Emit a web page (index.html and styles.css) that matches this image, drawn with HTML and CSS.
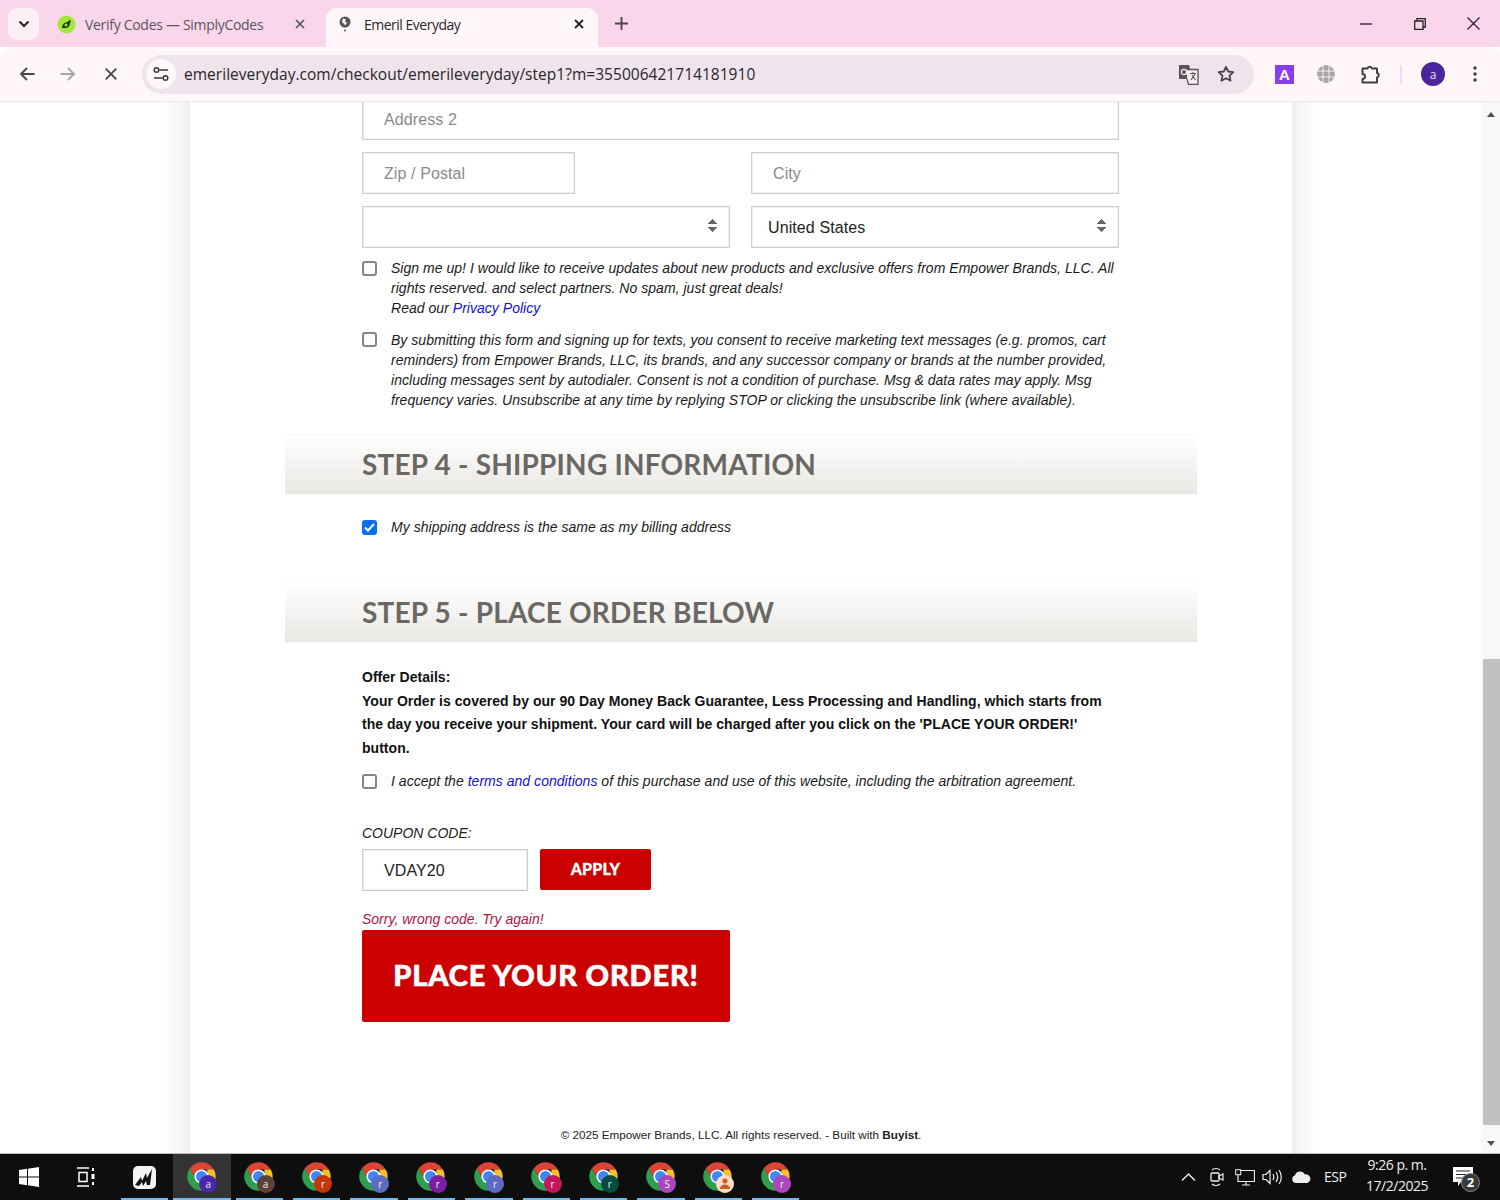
FILE: index.html
```html
<!DOCTYPE html>
<html lang="en">
<head>
<meta charset="utf-8">
<title>Emeril Everyday</title>
<link rel="stylesheet" href="styles.css">
</head>
<body>
<svg class="defs" width="0" height="0" aria-hidden="true">
  <symbol id="chrome" viewBox="0 0 48 48">
    <path fill="#db4437" d="M43.05 13A22 22 0 0 0 5.950 11.400L15 28 24 13z"/>
    <path fill="#f6c026" d="M43.05 13A22 22 0 0 1 24 46L33.500 29.500 33 13z"/>
    <path fill="#2f9e4f" d="M5.950 11.400A22 22 0 0 0 24 46L33.500 29.500 15 28z"/>
    <circle cx="24" cy="24" r="11" fill="#fff"/>
    <circle cx="24" cy="24" r="8.500" fill="#4285f4"/>
  </symbol>
</svg>

<header class="tabstrip">
  <button class="tab-list"><svg width="12" height="8" viewBox="0 0 12 8"><path d="M1.500 1.500 6 6l4.500-4.500" fill="none" stroke="#222" stroke-width="2"/></svg></button>
  <div class="tab tab-idle">
    <svg class="fav" width="19" height="19" viewBox="0 0 19 19"><circle cx="9.500" cy="9.500" r="9" fill="#a5e83c"/><path d="M5 13c0-4 3-6 6-6l1-2 2 1-1 2c0 3-2 5-5 5-1 0-2 0-3 0z" fill="#1d3b1a"/><circle cx="9" cy="10" r="1.500" fill="#a5e83c"/></svg>
    <span class="tab-title">Verify Codes — SimplyCodes</span>
    <svg class="tab-x" width="10" height="10" viewBox="0 0 10 10"><path d="M1 1l8 8M9 1l-8 8" stroke="#555" stroke-width="1.700"/></svg>
  </div>
  <div class="tab tab-active">
    <svg class="fav" width="14" height="16" viewBox="0 0 14 16"><circle cx="7" cy="6" r="5.500" fill="#5b5358"/><path d="M5 2.500l3 1-1 2 2 1.500-2 2.500-1-2-2-1z" fill="#fff5f9"/><circle cx="7" cy="14.500" r="1" fill="#5b5358"/></svg>
    <span class="tab-title">Emeril Everyday</span>
    <svg class="tab-x" width="10" height="10" viewBox="0 0 10 10"><path d="M1 1l8 8M9 1l-8 8" stroke="#222" stroke-width="1.800"/></svg>
  </div>
  <svg class="plus" width="13" height="13" viewBox="0 0 13 13"><path d="M6.500 0v13M0 6.500h13" stroke="#4a4347" stroke-width="1.800"/></svg>
  <div class="win-controls">
    <svg class="win-min" width="12" height="2" viewBox="0 0 12 2"><path d="M0 1h12" stroke="#222" stroke-width="1.300"/></svg>
    <svg width="12" height="12" viewBox="0 0 12 12"><path d="M3 3V.7h8.300V9H9M.7 3h8.300v8.300H.7z" fill="none" stroke="#222" stroke-width="1.300"/></svg>
    <svg width="13" height="13" viewBox="0 0 13 13"><path d="M.5.500l12 12M12.500.500l-12 12" stroke="#222" stroke-width="1.200"/></svg>
  </div>
</header>

<nav class="toolbar">
  <svg class="nav-ic nav-back" width="16" height="14" viewBox="0 0 16 14"><path d="M15.500 7H2M8 1 2 7l6 6" fill="none" stroke="#4a4347" stroke-width="1.800"/></svg>
  <svg class="nav-ic nav-fwd" width="16" height="14" viewBox="0 0 16 14"><path d="M.5 7H14M8 1l6 6-6 6" fill="none" stroke="#a9a2a7" stroke-width="1.800"/></svg>
  <svg class="nav-ic nav-stop" width="12" height="12" viewBox="0 0 12 12"><path d="M.7.700l10.600 10.600M11.300.700.700 11.300" stroke="#4a4347" stroke-width="1.800"/></svg>
  <div class="omnibox">
    <span class="tune"><svg width="16" height="16" viewBox="0 0 16 16"><path d="M6.500 4H15M1 12h8.500" stroke="#3c363a" stroke-width="1.500"/><circle cx="3.500" cy="4" r="2.300" fill="none" stroke="#3c363a" stroke-width="1.500"/><circle cx="12.500" cy="12" r="2.300" fill="none" stroke="#3c363a" stroke-width="1.500"/></svg></span>
    <span class="url">emerileveryday.com/checkout/emerileveryday/step1?m=355006421714181910</span>
    <svg class="translate" width="21" height="21" viewBox="0 0 21 21"><path d="M1 1h10l4 14H1z" fill="#5b5358"/><path d="M9 5.500h11v15H10.500L9 15" fill="#f6edf2" stroke="#5b5358" stroke-width="1.300"/><circle cx="6" cy="8" r="2.600" fill="none" stroke="#f6edf2" stroke-width="1.300"/><path d="M12 9.500h6M15 8v1.500M13 16l4-6M14 11l3.500 5" fill="none" stroke="#5b5358" stroke-width="1.100"/></svg>
    <svg class="star" width="18" height="18" viewBox="0 0 18 18"><path d="M9 1.800l2.200 4.700 5.100.6-3.800 3.500 1 5.100L9 13.200l-4.500 2.500 1-5.100L1.700 7.100l5.100-.6z" fill="none" stroke="#4a4347" stroke-width="1.800" stroke-linejoin="round"/></svg>
  </div>
  <span class="ext-a">A</span>
  <svg class="ext-globe" width="18" height="18" viewBox="0 0 18 18"><circle cx="9" cy="9" r="9" fill="#a8a5a7"/><path d="M0 6h18M0 12h18M6 0v18M12 0v18" stroke="#fff5f9" stroke-width=".9"/></svg>
  <svg class="ext-puzzle" width="20" height="20" viewBox="0 0 20 20"><path d="M1.500 4.500h5a2.300 2.300 0 0 1 4.500 0h5v4.500a2.300 2.300 0 0 1 0 4.500v5h-14.500v-3.500a2.500 2.500 0 0 0 0-5z" fill="none" stroke="#3f393d" stroke-width="1.900" stroke-linejoin="round"/></svg>
  <span class="tb-sep"></span>
  <span class="avatar">a</span>
  <svg class="kebab" width="4" height="16" viewBox="0 0 4 16"><circle cx="2" cy="2" r="1.700" fill="#3f393d"/><circle cx="2" cy="8" r="1.700" fill="#3f393d"/><circle cx="2" cy="14" r="1.700" fill="#3f393d"/></svg>
</nav>

<div class="viewport">
  <main class="page">
    <div class="card">
      <form class="form-col">
        <div class="field field-first"><span class="ph">Address 2</span></div>
        <div class="row-2">
          <div class="half"><div class="field field-zip"><span class="ph">Zip / Postal</span></div></div>
          <div class="half"><div class="field"><span class="ph">City</span></div></div>
        </div>
        <div class="row-2">
          <div class="half"><div class="field select"><span class="sort"></span></div></div>
          <div class="half"><div class="field select"><span class="sel-val">United States</span><span class="sort"></span></div></div>
        </div>
        <div class="check-row check-a">
          <span class="box"></span>
          <p>Sign me up! I would like to receive updates about new products and exclusive offers from Empower Brands, LLC. All rights reserved. and select partners. No spam, just great deals!<br>Read our <a>Privacy Policy</a></p>
        </div>
        <div class="check-row check-b">
          <span class="box"></span>
          <p>By submitting this form and signing up for texts, you consent to receive marketing text messages (e.g. promos, cart reminders) from Empower Brands, LLC, its brands, and any successor company or brands at the number provided, including messages sent by autodialer. Consent is not a condition of purchase. Msg &amp; data rates may apply. Msg frequency varies. Unsubscribe at any time by replying STOP or clicking the unsubscribe link (where available).</p>
        </div>
      </form>

      <h2 class="step step-4">STEP 4 - SHIPPING INFORMATION</h2>
      <div class="form-col">
        <div class="check-row check-ship">
          <span class="box box-on"><svg width="11" height="9" viewBox="0 0 11 9"><path d="M1 4.500l3 3 6-6.500" fill="none" stroke="#fff" stroke-width="2"/></svg></span>
          <p>My shipping address is the same as my billing address</p>
        </div>
      </div>

      <h2 class="step step-5">STEP 5 - PLACE ORDER BELOW</h2>
      <div class="form-col">
        <p class="offer">Offer Details:<br>Your Order is covered by our 90 Day Money Back Guarantee, Less Processing and Handling, which starts from the day you receive your shipment. Your card will be charged after you click on the 'PLACE YOUR ORDER!' button.</p>
        <div class="check-row check-terms">
          <span class="box"></span>
          <p>I accept the <a>terms and conditions</a> of this purchase and use of this website, including the arbitration agreement.</p>
        </div>
        <div class="coupon-label">COUPON CODE:</div>
        <div class="coupon">
          <div class="field field-coupon"><span class="coupon-val">VDAY20</span></div>
          <button type="button" class="apply">APPLY</button>
        </div>
        <div class="error">Sorry, wrong code. Try again!</div>
        <button type="button" class="place">PLACE YOUR ORDER!</button>
      </div>
      <footer class="legal">© 2025 Empower Brands, LLC. All rights reserved. - Built with <b>Buyist</b>.</footer>
    </div>
  </main>
  <aside class="scrollbar">
    <span class="arrow-up"></span>
    <span class="thumb"></span>
    <span class="arrow-down"></span>
  </aside>
</div>

<footer class="taskbar">
  <div class="task task-start"><svg width="20" height="20" viewBox="0 0 20 20"><path fill="#fff" d="M0 3l8-1.200v7.700H0zM9 1.700 20 0v9.500H9zM0 10.500h8v7.700L0 17zM9 10.500h11V20L9 18.300z"/></svg></div>
  <div class="task task-view"><svg width="20" height="20" viewBox="0 0 20 20"><path d="M1 1h12M1 19h12M3 5.500h8v9H3z" fill="none" stroke="#fff" stroke-width="1.500"/><rect x="16" y="1" width="2" height="3" fill="#fff"/><rect x="15.500" y="7" width="3" height="5" fill="#fff"/><rect x="16" y="15" width="2" height="3" fill="#fff"/></svg></div>
  <div class="task task-open"><span class="pin-app"><svg width="20" height="18" viewBox="0 0 20 18"><path d="M1 17 7 9l1 4 4-8 1 5 5-9-2 16h-3l-1-4-3 5-1-4-3 4z" fill="#111"/></svg></span></div>
  <div class="task task-open task-active"><svg class="chr"><use href="#chrome"/></svg><span class="badge b1">a</span></div>
  <div class="task task-open"><svg class="chr"><use href="#chrome"/></svg><span class="badge b2">a</span></div>
  <div class="task task-open"><svg class="chr"><use href="#chrome"/></svg><span class="badge b3">r</span></div>
  <div class="task task-open"><svg class="chr"><use href="#chrome"/></svg><span class="badge b4">r</span></div>
  <div class="task task-open"><svg class="chr"><use href="#chrome"/></svg><span class="badge b5">r</span></div>
  <div class="task task-open"><svg class="chr"><use href="#chrome"/></svg><span class="badge b4">r</span></div>
  <div class="task task-open"><svg class="chr"><use href="#chrome"/></svg><span class="badge b6">r</span></div>
  <div class="task task-open"><svg class="chr"><use href="#chrome"/></svg><span class="badge b7">r</span></div>
  <div class="task task-open"><svg class="chr"><use href="#chrome"/></svg><span class="badge b8">S</span></div>
  <div class="task task-open"><svg class="chr"><use href="#chrome"/></svg><span class="badge b9"><svg width="12" height="12" viewBox="0 0 12 12"><circle cx="6" cy="3" r="2.500" fill="#d9541e"/><path d="M1 11c0-3 2-4.500 5-4.500s5 1.500 5 4.500z" fill="#d9541e"/></svg></span></div>
  <div class="task task-open"><svg class="chr"><use href="#chrome"/></svg><span class="badge b8">r</span></div>
  <div class="tray">
    <svg class="tr-chev" width="15" height="8" viewBox="0 0 15 8"><path d="M1 7.500 7.500 1 14 7.500" fill="none" stroke="#eee" stroke-width="1.400"/></svg>
    <svg class="tr-meet" width="14" height="20" viewBox="0 0 14 20"><path d="M2 3c2-2 6-2 8 0M2 17c2 2 6 2 8 0" fill="none" stroke="#eee" stroke-width="1.200"/><rect x="1" y="6" width="8" height="8" rx="1" fill="none" stroke="#eee" stroke-width="1.300"/><path d="M9 9l4-2v6l-4-2z" fill="none" stroke="#eee" stroke-width="1.200"/></svg>
    <svg class="tr-net" width="20" height="17" viewBox="0 0 20 17"><path d="M5 1.500h14.500v11H3V6M11 12.500V16M7 16h8" fill="none" stroke="#eee" stroke-width="1.200"/><rect x=".7" y=".7" width="5" height="5" fill="#111" stroke="#eee"/></svg>
    <svg class="tr-vol" width="20" height="16" viewBox="0 0 20 16"><path d="M1 5.500h3L8 1.500v13l-4-4H1zM11 5c1 2 1 4 0 6M14 3c2 3 2 7 0 10M17 1c3 4 3 10 0 14" fill="none" stroke="#eee" stroke-width="1.200"/></svg>
    <svg class="tr-cloud" width="20" height="12" viewBox="0 0 20 12"><path d="M5 12a4 4 0 0 1-1-7.800A5.500 5.500 0 0 1 14 3.500 4.300 4.300 0 0 1 16 12z" fill="#eee"/></svg>
    <span class="tr-lang">ESP</span>
    <div class="tr-clock"><span>9:26 p. m.</span><span>17/2/2025</span></div>
    <div class="tr-notif">
      <svg width="20" height="19" viewBox="0 0 20 19"><path d="M0 0h20v15H8l-3 4v-4H0z" fill="#fff"/><path d="M3 4h14M3 7.500h14M3 11h9" stroke="#222" stroke-width="1.200"/></svg>
      <span class="notif-count">2</span>
    </div>
  </div>
</footer>
</body>
</html>
```

FILE: styles.css
```css
* { box-sizing: border-box; }
html, body { margin: 0; height: 1200px; overflow: hidden; }
body { display: flex; flex-direction: column; width: 1500px; font-family: "Liberation Sans", Arial, sans-serif; background: #fff; color: #111; }
.defs { position: absolute; }
button { font: inherit; border: 0; padding: 0; }

/* tab strip */
.tabstrip { height: 47px; flex: none; display: flex; align-items: flex-end; background: #f9d6ea; padding-left: 8px; position: relative; }
.tab-list { width: 31px; height: 32px; margin-bottom: 7px; border-radius: 9px; background: #fdeff6; display: flex; align-items: center; justify-content: center; }
.tab { height: 39px; display: flex; align-items: center; font: 14px "Open Sans", sans-serif; color: #5c555a; flex: none; }
.tab-idle { width: 287px; padding: 0 21px 7px 18px; letter-spacing: -.3px; }
.tab-idle .fav { margin-right: 9px; flex: none; }
.tab-title { flex: 1; }
.tab-active { width: 272px; background: #fff6fa; border-radius: 11px 11px 0 0; color: #2b2629; padding: 0 14px 7px 12px; letter-spacing: -.5px; }
.tab-active .fav { margin-right: 12px; flex: none; }
.tab-x { flex: none; }
.plus { margin: 0 0 17px 17px; }
.win-controls { margin-left: auto; display: flex; align-items: center; height: 47px; gap: 41px; padding-right: 20px; }
.win-min { margin-right: 1px; }

/* toolbar */
.toolbar { height: 55px; flex: none; display: flex; align-items: center; background: #fff6fa; border-bottom: 1px solid #eee6ea; border-radius: 10px 10px 0 0; padding-left: 19px; }
.nav-ic { flex: none; }
.nav-fwd { margin-left: 25px; }
.nav-stop { margin-left: 29px; }
.omnibox { margin-left: 25px; width: 1112px; height: 39px; border-radius: 20px; background: #f0e4ec; display: flex; align-items: center; padding-left: 4px; flex: none; }
.tune { width: 30px; height: 30px; border-radius: 50%; background: #fff6fa; display: flex; align-items: center; justify-content: center; flex: none; }
.url { margin-left: 8px; font: 15.500px "Open Sans", sans-serif; color: #2b2629; letter-spacing: .03px; white-space: nowrap; flex: 1; }
.translate { flex: none; margin-right: 18px; }
.star { flex: none; margin-right: 19px; }
.ext-a { margin-left: 21px; width: 19px; height: 19px; background: #8a3df0; color: #fff; font: bold 15px "Liberation Sans", sans-serif; display: flex; align-items: center; justify-content: center; flex: none; }
.ext-globe { margin-left: 23px; flex: none; }
.ext-puzzle { margin-left: 26px; flex: none; }
.tb-sep { width: 2px; height: 19px; background: #f9d6ea; margin-left: 19px; flex: none; }
.avatar { margin-left: 19px; width: 24px; height: 24px; border-radius: 50%; background: #4a259b; color: #e9dff5; font: 12px "Open Sans", sans-serif; display: flex; align-items: center; justify-content: center; flex: none; }
.kebab { margin-left: 28px; flex: none; }

/* page */
.viewport { flex: 1; min-height: 0; display: flex; overflow: hidden; background: #fff; }
.page { flex: 1; min-width: 0; padding-left: 190px; background: linear-gradient(90deg, #fff 163px, #f0f0f0 190px, #f0f0f0 1292px, #fff 1316px); }
.card { width: 1102px; height: 1051px; background: #fff; padding: 0 95px; display: flex; flex-direction: column; overflow: hidden; }
.form-col { padding-left: 77px; padding-right: 78px; }
.field { height: 42px; border: 1px solid #cdcdcd; box-shadow: inset 0 0 0 1px #efefef; background: #fff; font-size: 16px; letter-spacing: .1px; display: flex; align-items: center; padding: 2px 0 0 21px; }
.field-first { margin-top: -4px; }
.field-zip { width: 213px; }
.ph { color: #8a8a8a; }
.row-2 { display: flex; gap: 21px; margin-top: 12px; }
.half { width: 368px; }
.select { position: relative; padding-left: 16px; color: #222; }
.sort { position: absolute; right: 12px; top: 12px; width: 9px; height: 13px; background: conic-gradient(from 135deg at 50% 0, #666 90deg, transparent 0) top/9px 5px no-repeat, conic-gradient(from -45deg at 50% 100%, #666 90deg, transparent 0) bottom/9px 5px no-repeat; }

.check-row { display: flex; font-style: italic; font-size: 14px; line-height: 20px; letter-spacing: .03px; color: #1a1a1a; }
.check-row p { margin: 0; flex: 1; }
.box { flex: none; width: 15px; height: 15px; margin: 3px 14px 0 0; border: 2px solid #858585; border-radius: 3px; background: #fff; display: flex; align-items: center; justify-content: center; }
.box-on { background: #0b6fe8; border-color: #0b6fe8; }
a { color: #1010d8; }
.check-a { margin-top: 10px; }
.check-b { margin-top: 12px; }
.check-b .box { margin-top: 2px; }
.step { height: 60px; margin: 0; padding: 0 0 2px 77px; display: flex; align-items: center; font: 700 28px Lato, sans-serif; letter-spacing: .2px; color: #6b6864; background: linear-gradient(#fff, #e9e7e3); border-top: 1px solid #f6f6f6; }
.step-4 { margin-top: 24px; }
.step-5 { margin-top: 45px; }
.check-ship { margin-top: 23px; }
.offer { margin: 24px 0 0; font-weight: bold; font-size: 14px; line-height: 23.500px; letter-spacing: .03px; color: #111; }
.check-terms { margin-top: 10.500px; }
.coupon-label { margin-top: 32px; font-style: italic; font-size: 14px; line-height: 20px; color: #222; }
.coupon { display: flex; gap: 12px; margin-top: 6px; align-items: flex-start; }
.field-coupon { width: 166px; }
.coupon-val { font-size: 16px; color: #222; }
.apply { width: 111px; height: 41px; padding-bottom: 2px; border-radius: 2px; background: #cc0000; color: #fff; font: 900 16px Lato, sans-serif; letter-spacing: .2px; -webkit-text-stroke: .3px #fff; }
.error { margin-top: 18px; font-style: italic; font-size: 14px; line-height: 20px; color: #b5123f; height: 21px; }
.place { display: block; width: 368px; height: 92px; padding-bottom: 2px; border-radius: 2px; background: #cc0000; color: #fff; font: 900 29px Lato, sans-serif; letter-spacing: .83px; -webkit-text-stroke: .6px #fff; }
.legal { margin-top: 105px; text-align: center; font-size: 11.700px; line-height: 16px; color: #222; }

/* scrollbar */
.scrollbar { width: 18px; flex: none; position: relative; background: #f8f8f8; }
.thumb { position: absolute; left: 1px; right: 0; top: 557px; height: 466px; background: #c1c1c1; }
.arrow-up, .arrow-down { position: absolute; left: 5px; width: 0; height: 0; border-left: 4px solid transparent; border-right: 4px solid transparent; }
.arrow-up { top: 10px; border-bottom: 5px solid #505050; }
.arrow-down { bottom: 7px; border-top: 5px solid #505050; }

/* taskbar */
.taskbar { height: 47px; flex: none; display: flex; background: #0e0e0e; border-top: 1px solid #bdbdbd; padding-left: 1px; }
.task { width: 57.400px; flex: none; height: 100%; display: flex; align-items: center; justify-content: center; position: relative; }
.task-start { width: 56.400px; }
.task-view { width: 56.400px; margin-right: 2px; }
.task-open::after { content: ""; position: absolute; left: 5px; right: 5px; bottom: 0; height: 2px; background: #76b9ed; }
.task-active { background: #333; }
.task-active::after { left: 0; right: 0; }
.pin-app { width: 23px; height: 23px; border-radius: 5px; background: #f4f4f4; display: flex; align-items: center; justify-content: center; }
.chr { width: 31px; height: 31px; margin: 0 1px 1px 0; }
.badge { position: absolute; left: 26px; top: 21px; width: 18px; height: 18px; border-radius: 50%; color: #eee; font: 10px/18px "Open Sans", sans-serif; text-align: center; display: flex; align-items: center; justify-content: center; }
.b1 { background: #4b27a6; }
.b2 { background: #5b4037; }
.b3 { background: #c2360c; }
.b4 { background: #5c6bc0; }
.b5 { background: #7b1fa2; }
.b6 { background: #c2185b; }
.b7 { background: #004d40; }
.b8 { background: #ab47bc; }
.b9 { background: #fbe0c8; }
.tray { margin-left: auto; display: flex; align-items: center; color: #eee; padding-right: 10px; }
.tr-chev { margin-right: 14px; }
.tr-meet { margin-right: 11px; }
.tr-net { margin-right: 7px; }
.tr-vol { margin-right: 9px; }
.tr-cloud { margin-right: 13px; }
.tr-lang { font: 14px "Open Sans", sans-serif; width: 34px; letter-spacing: -.5px; margin: 0 3px 2px 0; }
.tr-clock { display: flex; flex-direction: column; align-items: center; font: 14px/21px "Open Sans", sans-serif; letter-spacing: -.5px; width: 72px; margin: 0 20px 4px 0; }
.tr-notif { position: relative; width: 37px; height: 30px; padding-top: 5px; }
.notif-count { position: absolute; left: 8px; top: 11px; width: 19px; height: 19px; border-radius: 50%; background: #3a3a3a; border: 1px solid #888; font: bold 13px/17px "Open Sans", sans-serif; text-align: center; color: #fff; }
```
